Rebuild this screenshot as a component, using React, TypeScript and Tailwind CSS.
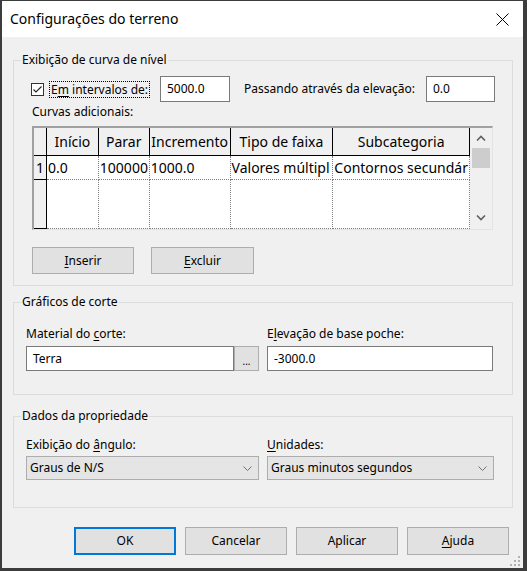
import React from 'react';

// Mnemonic: underline one letter of a label
const U: React.FC<{ children: React.ReactNode }> = ({ children }) => (
  <span className="underline underline-offset-2 decoration-1">{children}</span>
);

const GroupBox: React.FC<{ title: string; className: string; children: React.ReactNode }> = ({
  title,
  className,
  children,
}) => (
  <div className={`w-[500px] border border-[#dcdcdc] flex flex-col ${className}`}>
    <span className="-mt-[9px] ml-[7px] px-[1px] w-fit bg-[#f0f0f0] leading-[16px]">{title}</span>
    {children}
  </div>
);

const Chevron: React.FC<{ dir: 'up' | 'down'; className?: string }> = ({ dir, className }) => (
  <svg width="10" height="6" viewBox="0 0 10 6" className={className}>
    <path
      d={dir === 'up' ? 'M1 5.5 L5 1.5 L9 5.5' : 'M1 0.5 L5 4.5 L9 0.5'}
      fill="none"
      stroke="#606060"
      strokeWidth="1.6"
    />
  </svg>
);

const headers = [
  { label: 'Início', w: 'w-[52px]' },
  { label: 'Parar', w: 'w-[51px]' },
  { label: 'Incremento', w: 'w-[81px]' },
  { label: 'Tipo de faixa', w: 'w-[103px]' },
  { label: 'Subcategoria', w: 'w-[137px]' },
];

// cell texts as the narrow columns show them
const row = ['0.0', '100000', '1000.0', 'Valores múltipl', 'Contornos secundár'];

const CurveGrid: React.FC = () => (
  <div className="ml-[18px] mt-[6px] w-[461px] h-[104px] flex border-t-2 border-l-2 border-t-[#a0a0a0] border-l-[#a0a0a0] border-r border-b border-r-[#e3e3e3] border-b-[#e3e3e3] text-[14px] leading-[23px]">
    <div className="flex-1 flex flex-col overflow-hidden">
      {/* header */}
      <div className="flex h-[28px] bg-[#f0f0f0] border-b border-black">
        <div className="w-[13px] border-r border-black" />
        {headers.map((h) => (
          <div
            key={h.label}
            className={`${h.w} border-r border-black flex items-center justify-center whitespace-nowrap overflow-hidden`}
          >
            {h.label}
          </div>
        ))}
      </div>
      {/* row 1 */}
      <div className="flex h-[24px]">
        <div className="w-[13px] bg-[#f0f0f0] border-r border-b border-black text-center">1</div>
        {headers.map((h, i) => (
          <div
            key={h.label}
            className={`${h.w} bg-white border-r border-b border-dotted border-[#808080] pl-[1px] whitespace-nowrap overflow-hidden`}
          >
            {row[i]}
          </div>
        ))}
      </div>
      {/* empty area */}
      <div className="flex flex-1">
        <div className="w-[13px] bg-[#f0f0f0] border-r border-b border-black" />
        {headers.map((h) => (
          <div key={h.label} className={`${h.w} bg-white border-r border-b border-dotted border-[#808080]`} />
        ))}
      </div>
    </div>
    {/* vertical scrollbar */}
    <div className="w-[22px] bg-[#f0f0f0] flex flex-col items-start">
      <div className="h-[20px] w-full flex items-center justify-center">
        <Chevron dir="up" />
      </div>
      <div className="ml-[2px] w-[18px] h-[20px] bg-[#cdcdcd]" />
      <div className="flex-1" />
      <div className="h-[22px] w-full flex items-center justify-center">
        <Chevron dir="down" />
      </div>
    </div>
  </div>
);

const Button: React.FC<{ children: React.ReactNode; className?: string; primary?: boolean }> = ({
  children,
  className = '',
  primary,
}) => (
  <button
    className={`bg-[#e1e1e1] flex items-center justify-center ${
      primary ? 'border-2 border-[#0078d7]' : 'border border-[#adadad]'
    } ${className}`}
  >
    {children}
  </button>
);

const Select: React.FC<{ value: string; className: string }> = ({ value, className }) => (
  <div
    className={`h-[24px] bg-[#e5e5e5] border border-[#adadad] flex items-center justify-between pl-[3px] pr-[6px] ${className}`}
  >
    <span>{value}</span>
    <svg width="9" height="5" viewBox="0 0 9 5">
      <path d="M0.5 0.5 L4.5 4.5 L8.5 0.5" fill="none" stroke="#707070" strokeWidth="1" />
    </svg>
  </div>
);

export default function App() {
  return (
    <div className="relative w-[527px] h-[571px] bg-[#f0f0f0] border-t border-l-2 border-r-4 border-b-[3px] border-[#3c3c3c] flex flex-col font-['Noto_Sans',sans-serif] text-[12px] text-black leading-[16px] overflow-hidden">
      {/* title bar */}
      <div className="h-[36px] bg-white flex items-center justify-between pl-[8px] pr-[14px] shrink-0">
        <span className="text-[14px]">Configurações do terreno</span>
        <svg width="13" height="13" viewBox="0 0 13 13">
          <path d="M0.5 0.5 L12.5 12.5 M12.5 0.5 L0.5 12.5" stroke="#000" strokeWidth="1" />
        </svg>
      </div>

      <div className="flex flex-col px-[11px]">
        {/* Exibição de curva de nível */}
        <GroupBox title="Exibição de curva de nível" className="mt-[23px] h-[226px]">
          <div className="mt-[8px] h-[26px] flex items-center pl-[17px] pr-[17px]">
            <div className="w-[129px] flex items-center shrink-0">
              <svg width="13" height="13" viewBox="0 0 13 13" className="shrink-0">
                <rect x="0.5" y="0.5" width="12" height="12" fill="#fff" stroke="#333" />
                <path d="M2.5 6.5 L5 9 L10.5 3.5" fill="none" stroke="#222" strokeWidth="1.1" />
              </svg>
              <span className="ml-[5px] px-[1px] border border-dotted border-black leading-[15px] whitespace-nowrap">
                E<U>m</U> intervalos de:
              </span>
            </div>
            <div className="w-[70px] h-[26px] bg-white border border-[#7a7a7a] pl-[6px] flex items-center shrink-0">
              5000.0
            </div>
            <span className="ml-[14px] whitespace-nowrap">Passando através da elevação:</span>
            <div className="ml-auto w-[69px] h-[26px] bg-white border border-[#7a7a7a] pl-[6px] flex items-center shrink-0">
              0.0
            </div>
          </div>
          <span className="mt-[2px] ml-[18px]">Curvas adicionais:</span>
          <CurveGrid />
          <div className="mt-[17px] ml-[18px] flex gap-[17px]">
            <Button className="w-[102px] h-[27px]">
              <U>I</U>nserir
            </Button>
            <Button className="w-[103px] h-[27px]">
              <U>E</U>xcluir
            </Button>
          </div>
        </GroupBox>

        {/* Gráficos de corte */}
        <GroupBox title="Gráficos de corte" className="mt-[16px] h-[93px]">
          <div className="mt-[16px] ml-[12px] flex gap-[8px]">
            <div className="w-[233px] flex flex-col">
              <span>
                Material do <U>c</U>orte:
              </span>
              <div className="mt-[4px] flex h-[25px]">
                <div className="flex-1 bg-white border border-[#7a7a7a] pl-[6px] flex items-center">Terra</div>
                <Button className="w-[25px] h-[25px] text-[10px] leading-none pb-[4px] items-end">...</Button>
              </div>
            </div>
            <div className="w-[226px] flex flex-col">
              <span>
                E<U>l</U>evação de base poche:
              </span>
              <div className="mt-[4px] h-[25px] bg-white border border-[#7a7a7a] pl-[6px] flex items-center">
                -3000.0
              </div>
            </div>
          </div>
        </GroupBox>

        {/* Dados da propriedade */}
        <GroupBox title="Dados da propriedade" className="mt-[21px] h-[92px]">
          <div className="mt-[13px] ml-[12px] flex gap-[8px]">
            <div className="w-[233px] flex flex-col">
              <span>
                Exibição do <U>â</U>ngulo:
              </span>
              <Select value="Graus de N/S" className="mt-[3px] w-[233px]" />
            </div>
            <div className="w-[227px] flex flex-col">
              <span>
                <U>U</U>nidades:
              </span>
              <Select value="Graus minutos segundos" className="mt-[3px] w-[227px]" />
            </div>
          </div>
        </GroupBox>

        {/* dialog buttons */}
        <div className="mt-[19px] pr-[3px] flex justify-end gap-[9px]">
          <Button primary className="w-[102px] h-[28px]">
            OK
          </Button>
          <Button className="w-[102px] h-[28px]">Cancelar</Button>
          <Button className="w-[102px] h-[28px]">Aplicar</Button>
          <Button className="w-[102px] h-[28px]">
            <U>A</U>juda
          </Button>
        </div>
      </div>

      {/* size grip */}
      <svg width="12" height="12" viewBox="0 0 12 12" className="absolute right-[2px] bottom-[1px]">
        <rect x="9" y="1" width="2" height="2" fill="#b0b0b0" />
        <rect x="5" y="5" width="2" height="2" fill="#b0b0b0" />
        <rect x="9" y="5" width="2" height="2" fill="#b0b0b0" />
        <rect x="1" y="9" width="2" height="2" fill="#b0b0b0" />
        <rect x="5" y="9" width="2" height="2" fill="#b0b0b0" />
        <rect x="9" y="9" width="2" height="2" fill="#b0b0b0" />
      </svg>
    </div>
  );
}
